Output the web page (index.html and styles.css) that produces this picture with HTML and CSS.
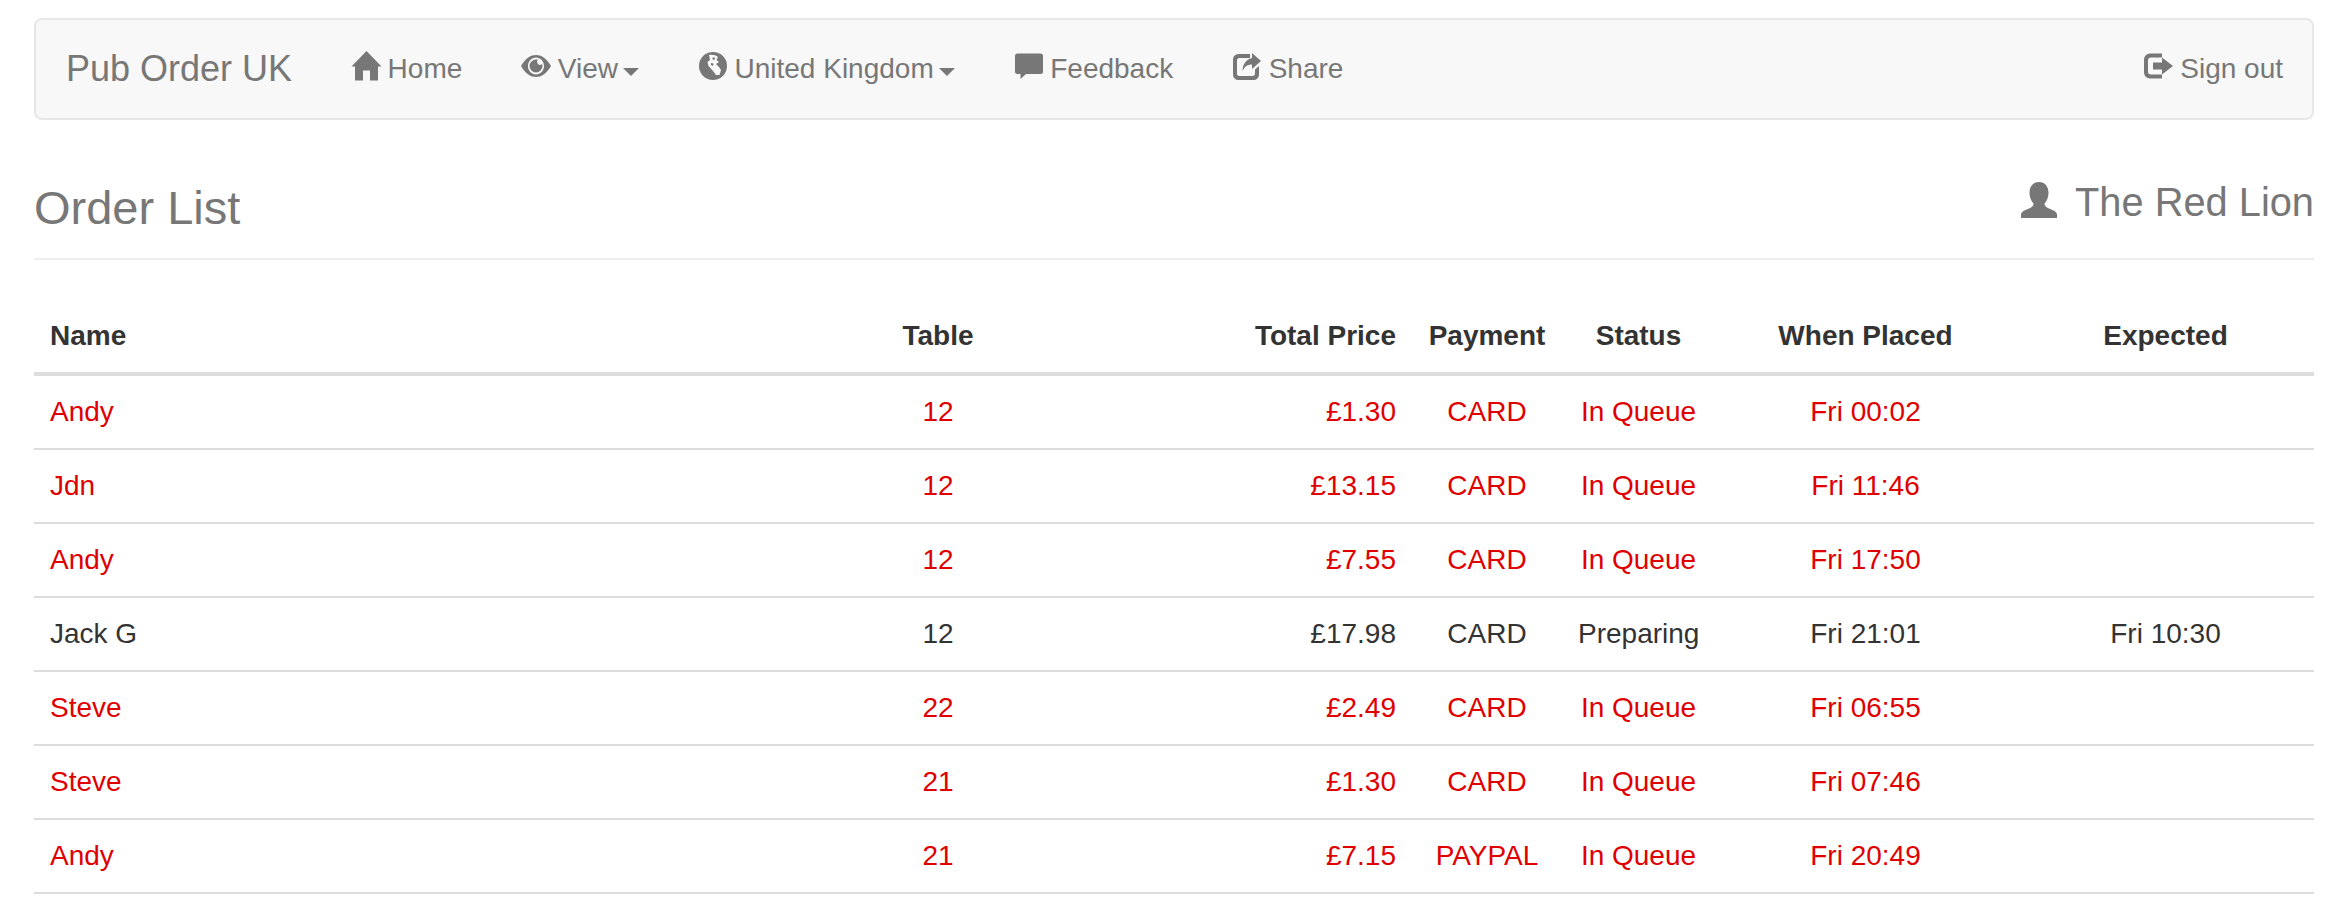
FILE: index.html
```html
<!DOCTYPE html>
<html lang="en">
<head>
    <meta charset="UTF-8">
    <title>Pub Order UK</title>
    <link rel="stylesheet" href="styles.css">
</head>
<body>
    <nav class="navbar">
        <a class="brand" href="#">Pub Order UK</a>
        <a class="nav-link" href="#">
            <svg class="icon" viewBox="0 0 28 28"><path d="M14.500 -1 L29.500 14.500 H26 V28.500 H18 V18.500 H11 V28.500 H3 V14.500 H-.5 Z"/></svg>
            Home
        </a>
        <a class="nav-link" href="#">
            <svg class="icon" viewBox="0 0 28 28"><path fill-rule="evenodd" d="M-1 14 C3.500 6 9 3 14 3 C19 3 24.500 6 29 14 C24.500 22 19 25 14 25 C9 25 3.500 22 -1 14 Z M14 5.500 C9.500 5.500 6 9.500 6 14 C6 18.500 9.500 22.500 14 22.500 C18.500 22.500 22 18.500 22 14 C22 9.500 18.500 5.500 14 5.500 Z"/><path fill-rule="evenodd" d="M14 7.500 A6.500 6.500 0 1 0 20.500 14 C20.500 13.200 20.300 12.500 20.100 11.900 A2.800 2.800 0 0 1 16 7.800 C15.400 7.600 14.700 7.500 14 7.500 Z"/></svg>
            View<span class="caret"></span>
        </a>
        <a class="nav-link" href="#">
            <svg class="icon" viewBox="0 0 28 28"><circle cx="14" cy="14" r="14"/><path class="land" d="M10 3 C13 2.500 17 3 19 5 L17.500 8 L20 10 L17 12 L20 15 L22 18 L20.500 23 L17 23 L14 19 L9.500 14 L8.500 10 L11 8 Z"/><path d="M13.500 5.500 L16 5.500 L15.500 8 L13.500 7.500 Z M12 11 L14.500 11.500 L14 14 L12 13 Z"/></svg>
            United Kingdom<span class="caret"></span>
        </a>
        <a class="nav-link" href="#">
            <svg class="icon" viewBox="0 0 28 28"><path d="M2.500 1.500 H25.500 A2.500 2.500 0 0 1 28 4 V19.500 A2.500 2.500 0 0 1 25.500 22 H11 L5.500 27 V22 H2.500 A2.500 2.500 0 0 1 0 19.500 V4 A2.500 2.500 0 0 1 2.500 1.500 Z"/></svg>
            Feedback
        </a>
        <a class="nav-link" href="#">
            <svg class="icon" viewBox="0 0 28 28"><path d="M5.500 2 H17 V6 H6.500 A2.500 2.500 0 0 0 4 8.500 V21.500 A2.500 2.500 0 0 0 6.500 24 H19.500 A2.500 2.500 0 0 0 22 21.500 V17.500 L26 14 V22.500 A5.500 5.500 0 0 1 20.500 28 H5.500 A5.500 5.500 0 0 1 0 22.500 V7.500 A5.500 5.500 0 0 1 5.500 2 Z"/><path d="M19 1 L28 9 L19 17 V12.500 C14.500 12.500 11.500 14.500 9.500 19 C9.500 12.500 13 7.500 19 6 Z"/></svg>
            Share
        </a>
        <a class="nav-link sign-out" href="#">
            <svg class="icon" viewBox="0 0 28 28"><path d="M5 1.500 H17 V5.500 H6 A3 3 0 0 0 3 8.500 V19.500 A3 3 0 0 0 6 22.500 H17 V26.500 H5 A6 6 0 0 1 -1 20.500 V7.500 A6 6 0 0 1 5 1.500 Z"/><path d="M8 10.500 H17 V5.500 L28 14 L17 22.500 V17.500 H8 Z"/></svg>
            Sign out
        </a>
    </nav>

    <header class="page-header">
        <h1>Order List</h1>
        <div class="pub-name">
            <svg class="user-icon" viewBox="0 0 36 36"><path d="M18 0 C24 0 27.500 4.500 27.500 11 C27.500 15.500 25.500 19.500 23.500 21.500 C23.500 24 25 25 27 26 C31 27.800 35 29 36 32 V36 H0 V32 C1 29 5 27.800 9 26 C11 25 12.500 24 12.500 21.500 C10.500 19.500 8.500 15.500 8.500 11 C8.500 4.500 12 0 18 0 Z"/></svg>
            The Red Lion
        </div>
    </header>

    <table class="orders">
        <thead>
            <tr>
                <th class="col-name">Name</th>
                <th class="col-table center">Table</th>
                <th class="col-price right">Total Price</th>
                <th class="col-payment center">Payment</th>
                <th class="col-status center">Status</th>
                <th class="col-placed center">When Placed</th>
                <th class="col-expected center">Expected</th>
            </tr>
        </thead>
        <tbody>
            <tr class="queued">
                <td>Andy</td><td class="center">12</td><td class="right">£1.30</td><td class="center">CARD</td><td class="center">In Queue</td><td class="center">Fri 00:02</td><td class="center"></td>
            </tr>
            <tr class="queued">
                <td>Jdn</td><td class="center">12</td><td class="right">£13.15</td><td class="center">CARD</td><td class="center">In Queue</td><td class="center">Fri 11:46</td><td class="center"></td>
            </tr>
            <tr class="queued">
                <td>Andy</td><td class="center">12</td><td class="right">£7.55</td><td class="center">CARD</td><td class="center">In Queue</td><td class="center">Fri 17:50</td><td class="center"></td>
            </tr>
            <tr>
                <td>Jack G</td><td class="center">12</td><td class="right">£17.98</td><td class="center">CARD</td><td class="center">Preparing</td><td class="center">Fri 21:01</td><td class="center">Fri 10:30</td>
            </tr>
            <tr class="queued">
                <td>Steve</td><td class="center">22</td><td class="right">£2.49</td><td class="center">CARD</td><td class="center">In Queue</td><td class="center">Fri 06:55</td><td class="center"></td>
            </tr>
            <tr class="queued">
                <td>Steve</td><td class="center">21</td><td class="right">£1.30</td><td class="center">CARD</td><td class="center">In Queue</td><td class="center">Fri 07:46</td><td class="center"></td>
            </tr>
            <tr class="queued">
                <td>Andy</td><td class="center">21</td><td class="right">£7.15</td><td class="center">PAYPAL</td><td class="center">In Queue</td><td class="center">Fri 20:49</td><td class="center"></td>
            </tr>
        </tbody>
    </table>
</body>
</html>
```

FILE: styles.css
```css
body {
    margin: 0;
    padding: 18px 34px 0 34px;
    font-family: "Liberation Sans", Arial, sans-serif;
    font-size: 28px;
    color: #333;
    background: #fff;
}
a { color: inherit; text-decoration: none; }

.navbar {
    display: flex;
    align-items: center;
    gap: 60px;
    height: 102px;
    box-sizing: border-box;
    padding: 0 29px 0 30px;
    background: #f8f8f8;
    border: 2px solid #e7e7e7;
    border-radius: 8px;
    color: #777;
}
.brand { font-size: 36px; }
.nav-link { display: flex; align-items: center; }
.icon { width: 28px; height: 28px; margin: 0 7.5px 7px 0; fill: currentColor; overflow: visible; }
.land { fill: #f8f8f8; }
.caret {
    width: 0;
    height: 0;
    margin: 5px 0 0 5px;
    border-top: 8px solid #777;
    border-left: 8px solid transparent;
    border-right: 8px solid transparent;
}
.sign-out { margin-left: auto; }

.page-header {
    display: flex;
    justify-content: space-between;
    align-items: flex-start;
    padding: 60px 0 24px;
    border-bottom: 2px solid #eee;
    color: #777;
}
h1 { margin: 2px 0 0; font-size: 47px; font-weight: normal; line-height: 52px; }
.pub-name { display: flex; align-items: center; font-size: 39.8px; line-height: 44px; }
.user-icon { width: 36px; height: 36px; margin: 0 18px 4px 0; fill: currentColor; }

.orders {
    width: 100%;
    margin-top: 40px;
    border-collapse: separate;
    border-spacing: 0;
    table-layout: fixed;
}
.orders th, .orders td { padding: 16px 15px; line-height: 40px; font-size: 28px; text-align: left; }
.orders th:first-child, .orders td:first-child { padding-left: 16px; }
.orders th { border-bottom: 4px solid #ddd; font-weight: bold; }
.orders td { border-bottom: 2px solid #ddd; }
.orders th.center, .orders td.center { text-align: center; }
.orders th.right, .orders td.right { text-align: right; }
.queued td { color: #e00000; }

.col-name { width: 575px; }
.col-table { width: 566px; }
.col-price { width: 145px; }
.col-payment { width: 122px; }
.col-status { width: 121px; }
.col-placed { width: 273px; }
```
